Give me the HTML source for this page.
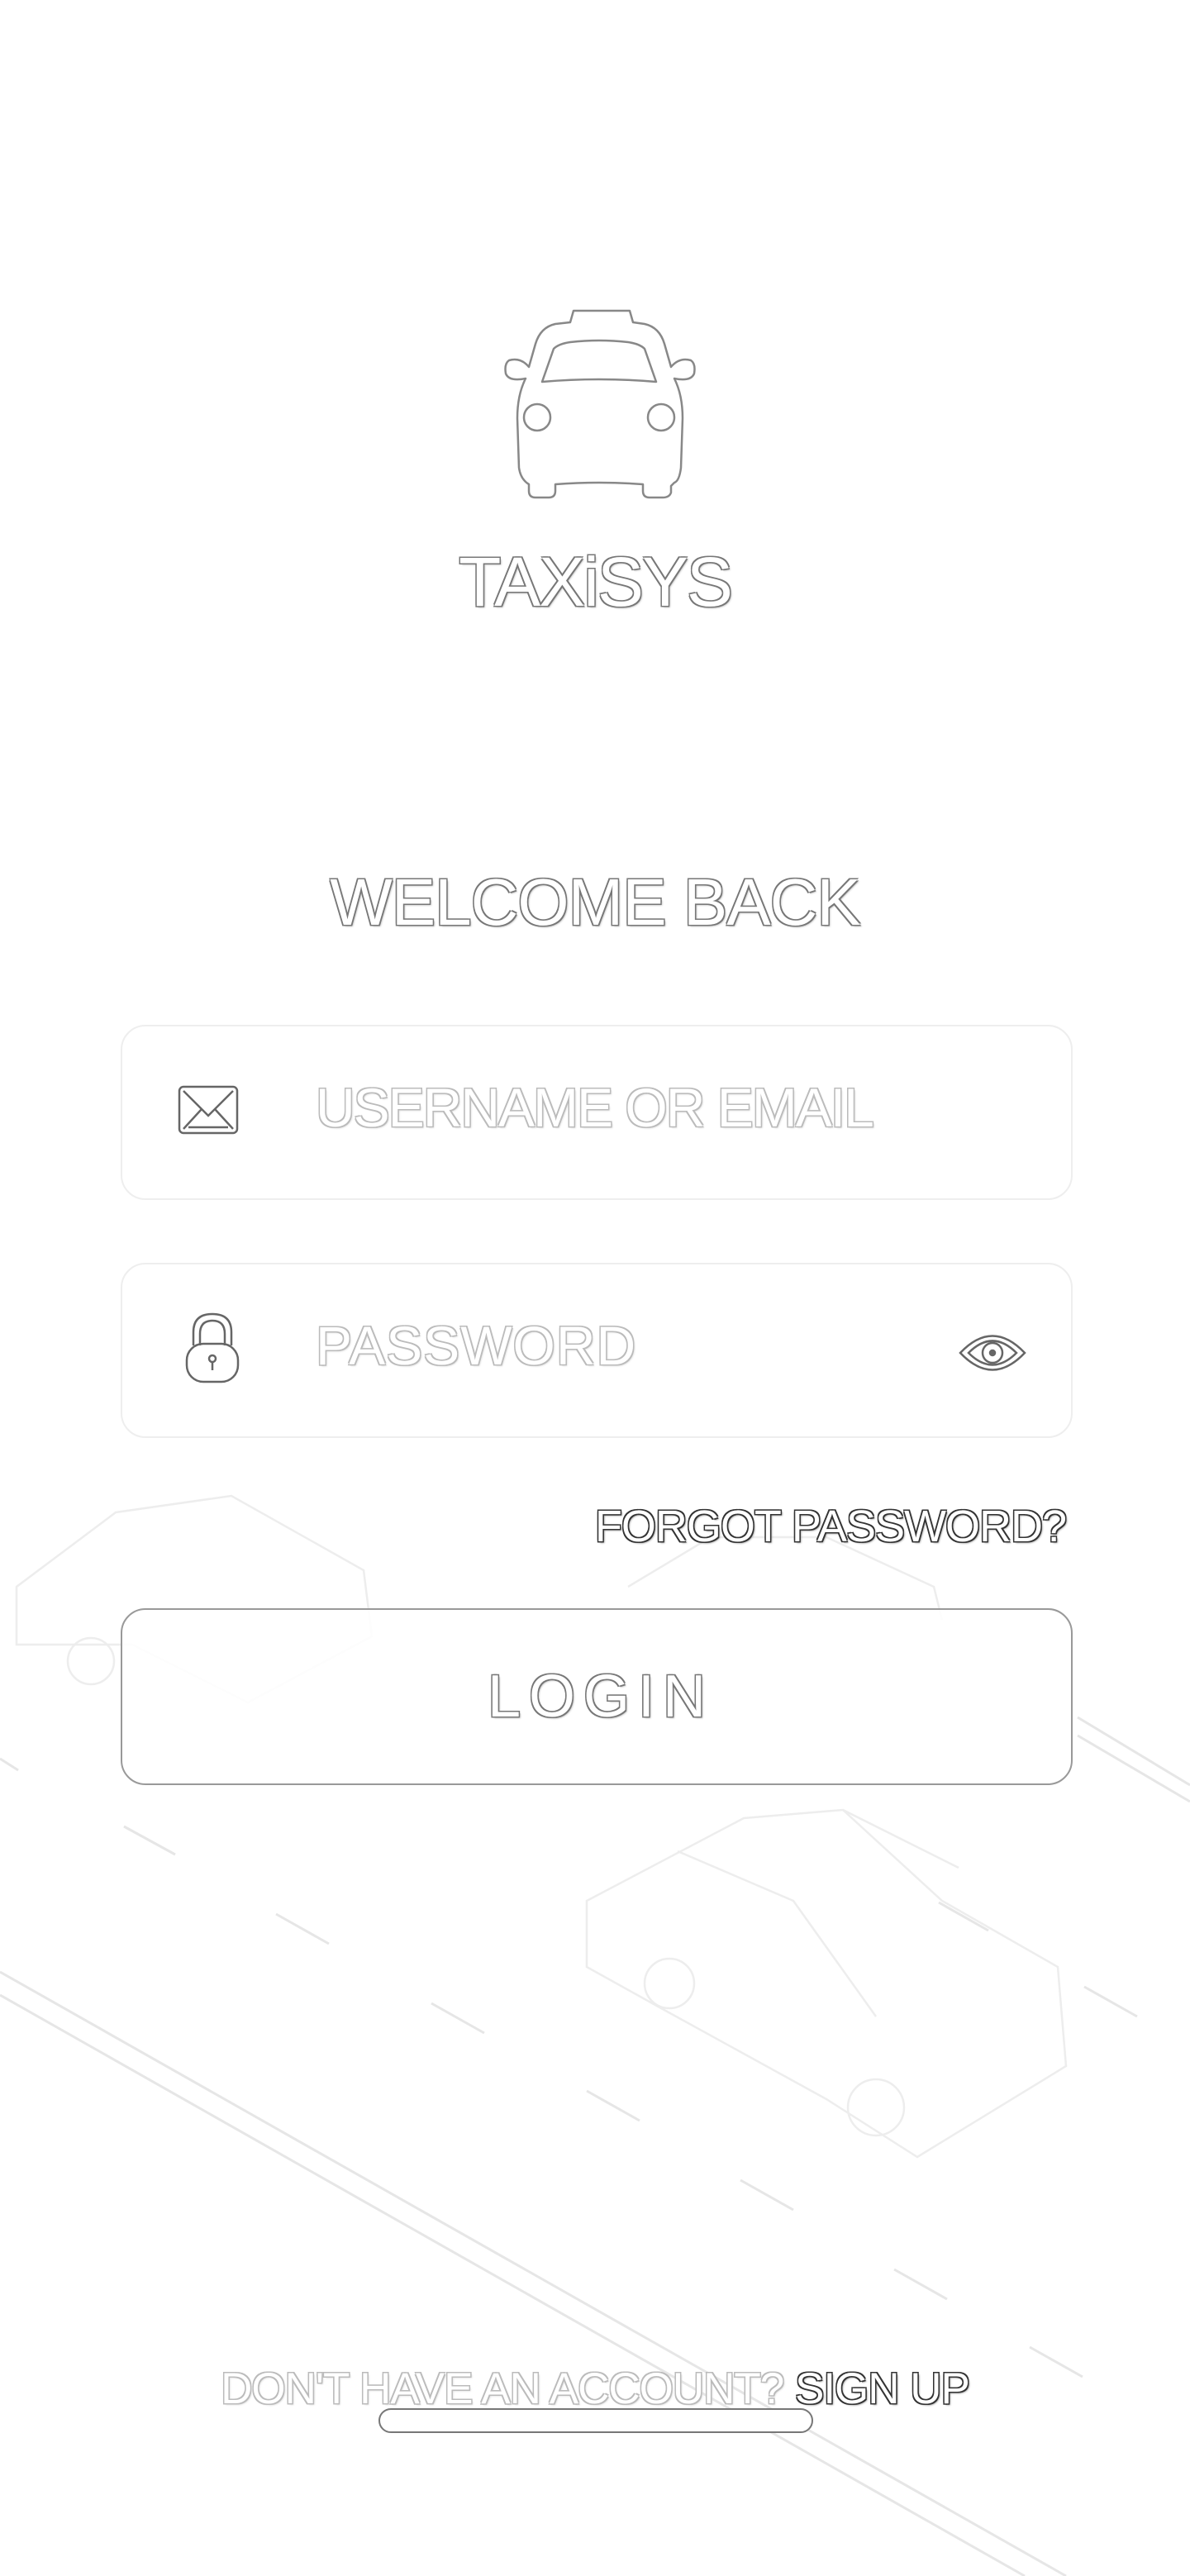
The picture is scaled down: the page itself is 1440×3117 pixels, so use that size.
<!DOCTYPE html>
<html><head><meta charset="utf-8"><style>
html,body{margin:0;padding:0;background:#fff;}
body{width:1440px;height:3117px;position:relative;overflow:hidden;font-family:"Liberation Sans",sans-serif;}
.o{position:absolute;color:#fff;white-space:nowrap;
 text-shadow:-1.5px -1.5px 0 #777,1.5px -1.5px 0 #777,-1.5px 1.5px 0 #777,1.5px 1.5px 0 #777,2px 2px 2px #bbb;}
.l{text-shadow:-1.5px -1.5px 0 #bbb,1.5px -1.5px 0 #bbb,-1.5px 1.5px 0 #bbb,1.5px 1.5px 0 #bbb,2px 2px 2px #ddd;}
.d{text-shadow:-1.5px -1.5px 0 #333,1.5px -1.5px 0 #333,-1.5px 1.5px 0 #333,1.5px 1.5px 0 #333,2px 2px 2px #999;}
.field{position:absolute;left:146px;width:1152px;height:212px;border:2px solid #eee;border-radius:30px;box-sizing:border-box;}
</style></head><body>
<svg style="position:absolute;left:0;top:0" width="1440" height="3117">
 <g stroke="#e6e6e6" stroke-width="3" fill="none">
  <line x1="0" y1="2386" x2="1290" y2="3117"/>
  <line x1="0" y1="2414" x2="1240" y2="3117"/>
  <line x1="1304" y1="2078" x2="1440" y2="2160"/>
  <line x1="1304" y1="2100" x2="1440" y2="2180"/>
  <line x1="150" y1="2210" x2="212" y2="2244"/>
  <line x1="334" y1="2316" x2="398" y2="2352"/>
  <line x1="522" y1="2424" x2="586" y2="2460"/>
  <line x1="710" y1="2530" x2="774" y2="2566"/>
  <line x1="896" y1="2638" x2="960" y2="2674"/>
  <line x1="1082" y1="2746" x2="1146" y2="2782"/>
  <line x1="1246" y1="2840" x2="1310" y2="2876"/>
  <line x1="1136" y1="2302" x2="1196" y2="2336"/>
  <line x1="1312" y1="2404" x2="1376" y2="2440"/>
  <line x1="0" y1="2128" x2="22" y2="2142"/>
 </g>
 <g stroke="#ededed" stroke-width="2.5" fill="none">
  <path d="M710 2300 L900 2200 L1020 2190 L1140 2300 L1280 2380 L1290 2500 L1110 2610 L1000 2540 L800 2430 L710 2380 Z"/>
  <path d="M820 2240 L960 2300 L1060 2440 M1020 2190 L1160 2260"/>
  <circle cx="810" cy="2400" r="30"/><circle cx="1060" cy="2550" r="34"/>
  <path d="M20 1920 L140 1830 L280 1810 L440 1900 L450 1980 L300 2060 L160 1990 L20 1990 Z"/>
  <circle cx="110" cy="2010" r="28"/>
  <path d="M760 1920 L860 1860 L1000 1860 L1130 1920 L1140 1960"/>
 </g>
</svg>
<!-- taxi logo -->
<svg style="position:absolute;left:590px;top:366px" width="270" height="240" viewBox="0 0 270 240">
 <g fill="#fff" stroke="#888" stroke-width="2.5" stroke-linejoin="round">
  <path d="M100 24 L104 10 L172 10 L176 24 L190 26 Q208 30 214 50 L222 78 Q232 66 246 70 Q252 74 250 86 Q246 96 226 92 Q236 112 236 140 L234 200 Q232 216 226 218 L222 222 L222 230 Q220 236 212 236 L196 236 Q188 236 188 228 L188 220 Q135 216 82 220 L82 228 Q82 236 74 236 L58 236 Q50 236 50 228 L50 220 Q40 214 38 200 L36 140 Q36 112 46 92 Q26 96 22 86 Q20 74 26 70 Q40 66 50 78 L58 50 Q64 30 82 26 Z"/>
  <path d="M66 96 L80 56 Q86 50 100 48 Q135 44 170 48 Q184 50 190 56 L204 96 Q135 90 66 96 Z"/>
  <circle cx="60" cy="139" r="16"/><circle cx="210" cy="139" r="16"/>
 </g>
</svg>
<div class="o" style="left:520px;top:656px;width:400px;text-align:center;font-size:84px;letter-spacing:-2px;">TAXiSYS</div>
<div class="o" style="left:300px;top:1046px;width:840px;text-align:center;font-size:80px;letter-spacing:-1px;">WELCOME BACK</div>

<div class="field" style="top:1240px"></div>
<svg style="position:absolute;left:214px;top:1312px" width="76" height="62" viewBox="0 0 76 62">
 <g fill="none" stroke="#666" stroke-width="2.5"><rect x="3" y="3" width="70" height="56" rx="5"/><path d="M8 8 L38 38 L68 8 M8 54 L30 30 M68 54 L46 30 M14 52 H62"/></g>
</svg>
<div class="o l" style="left:382px;top:1302px;font-size:66px;letter-spacing:-2px;">USERNAME OR EMAIL</div>

<div class="field" style="top:1528px"></div>
<svg style="position:absolute;left:220px;top:1584px" width="74" height="92" viewBox="0 0 74 92">
 <g fill="none" stroke="#666" stroke-width="2.5"><path d="M14 44 V28 Q14 6 37 6 Q60 6 60 28 V44"/><path d="M22 44 V30 Q22 14 37 14 Q52 14 52 30 V44"/><rect x="6" y="42" width="62" height="46" rx="20"/><circle cx="37" cy="60" r="4"/><path d="M37 64 V74"/></g>
</svg>
<div class="o l" style="left:382px;top:1590px;font-size:66px;letter-spacing:1px;">PASSWORD</div>
<svg style="position:absolute;left:1158px;top:1604px" width="86" height="66" viewBox="0 0 86 66">
 <g fill="none" stroke="#666" stroke-width="2.5"><path d="M4 33 Q43 -8 82 33 Q43 74 4 33 Z"/><path d="M14 33 Q43 4 72 33 Q43 62 14 33 Z"/><circle cx="43" cy="33" r="12"/><circle cx="43" cy="33" r="3" fill="#666"/></g>
</svg>

<div class="o d" style="left:690px;top:1816px;width:600px;text-align:right;font-size:54px;letter-spacing:-1px;">FORGOT PASSWORD?</div>

<div style="position:absolute;left:146px;top:1946px;width:1152px;height:214px;border:2.5px solid #999;border-radius:30px;box-sizing:border-box;background:rgba(255,255,255,0.85);"></div>
<div class="o" style="left:146px;top:2012px;width:1152px;text-align:center;font-size:72px;letter-spacing:10px;text-indent:10px;">LOGIN</div>

<div style="position:absolute;left:220px;top:2860px;width:1000px;text-align:center;font-size:53px;letter-spacing:-1px;white-space:nowrap;"><span class="o l" style="position:static">DON'T HAVE AN ACCOUNT? </span><span class="o d" style="position:static">SIGN UP</span></div>

<div style="position:absolute;left:458px;top:2914px;width:526px;height:30px;border:2.5px solid #777;border-radius:15px;box-sizing:border-box;background:#fff;"></div>
</body></html>
